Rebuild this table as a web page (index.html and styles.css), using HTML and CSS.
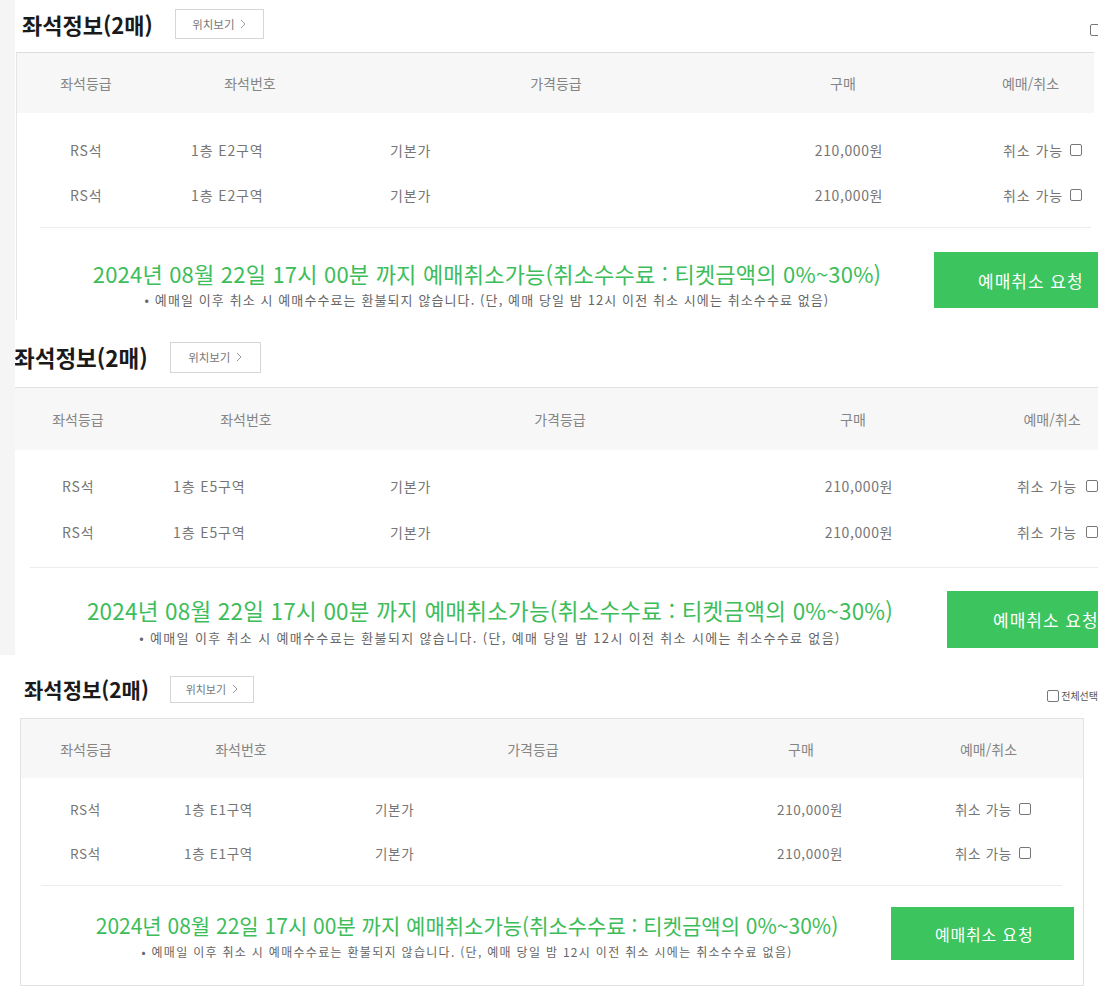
FILE: index.html
```html
<!DOCTYPE html>
<html lang="ko">
<head>
<meta charset="utf-8">
<link rel="stylesheet" href="styles.css">
</head>
<body>
<div class="page">

  <section class="panel p1">
    <div class="head">
      <h2 class="title">좌석정보(2매)</h2>
      <span class="loc">위치보기 <svg class="chev" viewBox="0 0 6 10" width="6" height="10"><path d="M1 1 L5 5 L1 9" fill="none" stroke="#999" stroke-width="1"/></svg></span>
      <span class="all"><i class="cb"></i></span>
    </div>
    <div class="box">
      <div class="thead">
        <span>좌석등급</span><span>좌석번호</span><span>가격등급</span><span>구매</span><span class="last">예매/취소</span>
      </div>
      <div class="tbody">
        <div class="row"><span>RS석</span><span>1층 E2구역</span><span>기본가</span><span class="price">210,000원</span><span class="act">취소 가능 <i class="cb"></i></span></div>
        <div class="row"><span>RS석</span><span>1층 E2구역</span><span>기본가</span><span class="price">210,000원</span><span class="act">취소 가능 <i class="cb"></i></span></div>
      </div>
      <div class="sep"></div>
      <div class="foot">
        <div class="msg">
          <p class="green">2024년 08월 22일 17시 00분 까지 예매취소가능(취소수수료 : 티켓금액의 0%~30%)</p>
          <p class="note">• 예매일 이후 취소 시 예매수수료는 환불되지 않습니다. (단, 예매 당일 밤 12시 이전 취소 시에는 취소수수료 없음)</p>
        </div>
        <div class="btn">예매취소 요청</div>
      </div>
    </div>
  </section>

  <section class="panel p2">
    <div class="head">
      <h2 class="title">좌석정보(2매)</h2>
      <span class="loc">위치보기 <svg class="chev" viewBox="0 0 6 10" width="6" height="10"><path d="M1 1 L5 5 L1 9" fill="none" stroke="#999" stroke-width="1"/></svg></span>
    </div>
    <div class="box">
      <div class="thead">
        <span>좌석등급</span><span>좌석번호</span><span>가격등급</span><span>구매</span><span class="last">예매/취소</span>
      </div>
      <div class="tbody">
        <div class="row"><span>RS석</span><span>1층 E5구역</span><span>기본가</span><span class="price">210,000원</span><span class="act">취소 가능 <i class="cb"></i></span></div>
        <div class="row"><span>RS석</span><span>1층 E5구역</span><span>기본가</span><span class="price">210,000원</span><span class="act">취소 가능 <i class="cb"></i></span></div>
      </div>
      <div class="sep"></div>
      <div class="foot">
        <div class="msg">
          <p class="green">2024년 08월 22일 17시 00분 까지 예매취소가능(취소수수료 : 티켓금액의 0%~30%)</p>
          <p class="note">• 예매일 이후 취소 시 예매수수료는 환불되지 않습니다. (단, 예매 당일 밤 12시 이전 취소 시에는 취소수수료 없음)</p>
        </div>
        <div class="btn">예매취소 요청</div>
      </div>
    </div>
  </section>

  <section class="panel p3">
    <div class="head">
      <h2 class="title">좌석정보(2매)</h2>
      <span class="loc">위치보기 <svg class="chev" viewBox="0 0 6 10" width="6" height="10"><path d="M1 1 L5 5 L1 9" fill="none" stroke="#999" stroke-width="1"/></svg></span>
      <span class="all"><i class="cb"></i>전체선택</span>
    </div>
    <div class="box">
      <div class="thead">
        <span>좌석등급</span><span>좌석번호</span><span>가격등급</span><span>구매</span><span class="last">예매/취소</span>
      </div>
      <div class="tbody">
        <div class="row"><span>RS석</span><span>1층 E1구역</span><span>기본가</span><span class="price">210,000원</span><span class="act">취소 가능 <i class="cb"></i></span></div>
        <div class="row"><span>RS석</span><span>1층 E1구역</span><span>기본가</span><span class="price">210,000원</span><span class="act">취소 가능 <i class="cb"></i></span></div>
      </div>
      <div class="sep"></div>
      <div class="foot">
        <div class="msg">
          <p class="green">2024년 08월 22일 17시 00분 까지 예매취소가능(취소수수료 : 티켓금액의 0%~30%)</p>
          <p class="note">• 예매일 이후 취소 시 예매수수료는 환불되지 않습니다. (단, 예매 당일 밤 12시 이전 취소 시에는 취소수수료 없음)</p>
        </div>
        <div class="btn">예매취소 요청</div>
      </div>
    </div>
  </section>

</div>
</body>
</html>
```

FILE: styles.css
```css
* { box-sizing: border-box; }
html, body { margin: 0; padding: 0; background: #fff; }
body {
  width: 1098px;
  height: 989px;
  overflow: hidden;
  font-family: "Noto Sans CJK KR", "Noto Sans", sans-serif;
  color: #666;
}
.page { display: flex; flex-direction: column; width: 1098px; }
.panel { position: relative; overflow: hidden; background: #fff; }
p { margin: 0; }

.head { display: flex; align-items: center; }
.title { margin: 0; font-size: 22px; font-weight: 700; color: #1a1a1a; letter-spacing: 0; line-height: 1; }
.loc {
  display: flex; align-items: center; justify-content: center; gap: 6px;
  border: 1px solid #d6d6d6; background: #fff;
  font-size: 11.5px; color: #777; letter-spacing: 0;
}
.chev { display: block; }
.cb {
  display: inline-block; width: 12px; height: 12px;
  border: 1px solid #777; border-radius: 2px; background: #fff;
  vertical-align: middle; flex: none;
}
.all { display: flex; align-items: center; gap: 2px; font-size: 10px; color: #555; margin-left: auto; }

.box { background: #fff; }
.thead { display: grid; background: #f7f7f7; align-items: center; font-size: 14px; color: #858585; }
.thead span { text-align: center; }
.row { display: grid; align-items: center; font-size: 14px; color: #767676; letter-spacing: 0.9px; }
.price { text-align: right; letter-spacing: 0.6px; }
.act { display: flex; align-items: center; gap: 7px; }
.sep { height: 1px; background: #ececec; }
.foot { display: flex; align-items: flex-start; }
.msg { text-align: center; flex: none; }
.green { color: #3dbd5a; line-height: 1; white-space: nowrap; }
.note { color: #666; line-height: 1; white-space: nowrap; }
.btn {
  flex: none; display: flex; align-items: center;
  background: #3cc45e; color: #fff; font-size: 17px; letter-spacing: 1px;
}

/* ---------- panel 1 ---------- */
.p1 { height: 320px; border-left: 15px solid #f4f5f4; }
.p1 .head { height: 52px; padding-left: 7px; padding-bottom: 5px; }
.p1 .title { font-size: 22px; }
.p1 .loc { width: 89px; height: 30px; margin-left: 22px; }
.p1 .all { margin-right: -4px; margin-top: 13px; }
.p1 .box { margin-left: 1px; border-left: 1px solid #e6e6e6; border-top: 1px solid #dcdcdc; height: 300px; width: 1078px; }
.p1 .thead { height: 60px; grid-template-columns: 138px 190px 422px 152px 1fr; }
.p1 .thead .last { padding-left: 48px; }
.p1 .tbody { padding: 14px 0 10px; }
.p1 .row { height: 45px; grid-template-columns: 174px 199px 393px 100px 1fr; }
.p1 .row span:first-child { padding-left: 53px; }
.p1 .act { padding-left: 120px; }
.p1 .sep { margin: 0 3px 0 23px; }
.p1 .foot { padding-top: 24px; }
.p1 .msg { width: 800px; margin-left: 70px; padding-top: 10px; }
.p1 .green { font-size: 22px; letter-spacing: 0.2px; }
.p1 .note { font-size: 13px; letter-spacing: 1.1px; margin-top: 9px; }
.p1 .btn { width: 190px; height: 56px; margin-left: 47px; padding-left: 44px; }

/* ---------- panel 2 ---------- */
.p2 { height: 335px; border-left: 15px solid #f4f5f4; }
.p2 .head { height: 67px; padding-left: 0; margin-left: -1px; padding-top: 7px; }
.p2 .title { font-size: 22.5px; }
.p2 .loc { width: 91px; height: 31px; margin-left: 22px; }
.p2 .box { border-top: 1px solid #e2e2e2; height: 280px; width: 1083px; }
.p2 .thead { height: 62px; grid-template-columns: 126px 210px 418px 168px 1fr; }
.p2 .thead .last { padding-left: 69px; }
.p2 .tbody { padding: 13px 0 12px; }
.p2 .row { height: 46px; grid-template-columns: 158px 217px 403px 100px 1fr; }
.p2 .row span:first-child { padding-left: 47px; }
.p2 .act { padding-left: 124px; gap: 9px; }
.p2 .sep { margin: 0 0 0 15px; }
.p2 .foot { padding-top: 23px; }
.p2 .msg { width: 820px; margin-left: 65px; padding-top: 8px; }
.p2 .green { font-size: 22.5px; letter-spacing: 0.2px; }
.p2 .note { font-size: 13px; letter-spacing: 1.35px; margin-top: 9px; }
.p2 .btn { width: 200px; height: 57px; margin-left: 47px; padding-left: 46px; }

/* ---------- panel 3 ---------- */
.p3 { height: 334px; }
.p3 .head { height: 63px; padding-left: 24px; padding-top: 5px; }
.p3 .title { font-size: 21px; }
.p3 .loc { width: 84px; height: 27px; margin-left: 21px; font-size: 11px; }
.p3 .all { margin-right: 0; margin-top: 13px; }
.p3 .box { margin-left: 20px; width: 1064px; height: 268px; border: 1px solid #e2e2e2; }
.p3 .thead { height: 59px; grid-template-columns: 130px 180px 404px 132px 1fr; }
.p3 .thead .last { padding-left: 27px; }
.p3 .tbody { padding: 9px 0 10px; }
.p3 .row { height: 44px; grid-template-columns: 163px 191px 388px 80px 1fr; font-size: 13.5px; letter-spacing: 0.7px; }
.p3 .row span:first-child { padding-left: 49px; }
.p3 .act { padding-left: 112px; }
.p3 .sep { margin: 0 21px 0 20px; }
.p3 .foot { padding-top: 21px; }
.p3 .msg { width: 760px; margin-left: 66px; padding-top: 8px; }
.p3 .green { font-size: 21px; letter-spacing: 0; }
.p3 .note { font-size: 12px; letter-spacing: 1.3px; margin-top: 10px; }
.p3 .btn { width: 183px; height: 53px; margin-left: 44px; padding-left: 44px; font-size: 16px; letter-spacing: 0.8px; }
```
